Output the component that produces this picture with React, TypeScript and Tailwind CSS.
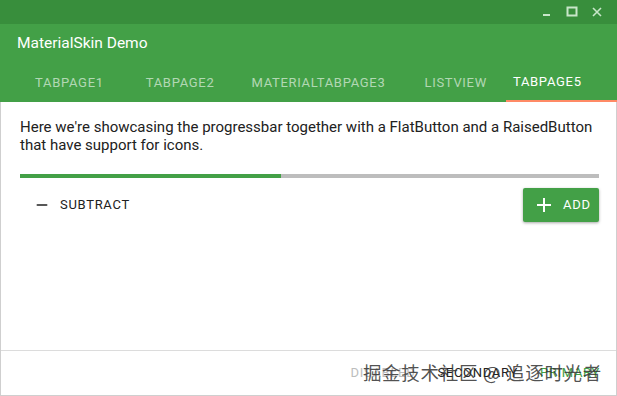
import { Minus } from 'lucide-react';

const tabs = [
  { label: 'TABPAGE1', ml: 'ml-[35px]' },
  { label: 'TABPAGE2', ml: 'ml-[42px]' },
  { label: 'MATERIALTABPAGE3', ml: 'ml-[37px]' },
  { label: 'LISTVIEW', ml: 'ml-[39px]' },
];

export default function App() {
  return (
    <div
      className="w-[617px] h-[396px] flex flex-col bg-white overflow-hidden"
      style={{ fontFamily: 'Roboto, "Noto Sans", sans-serif' }}
    >
      {/* Title bar */}
      <div className="h-[24px] bg-[#388e3c] flex items-center justify-end pr-[14px] gap-[13px] text-[#c8e6c9]">
        <svg width="12" height="12" viewBox="0 0 12 12">
          <rect x="2" y="8" width="7" height="2" fill="currentColor" />
        </svg>
        <svg width="12" height="12" viewBox="0 0 12 12">
          <rect x="1.5" y="1.5" width="9" height="8" fill="none" stroke="currentColor" strokeWidth="2" />
        </svg>
        <svg width="12" height="12" viewBox="0 0 12 12">
          <path d="M2 2 L10 10 M10 2 L2 10" stroke="currentColor" strokeWidth="1.6" />
        </svg>
      </div>

      {/* Header */}
      <div className="bg-[#43a047] h-[78px] flex flex-col">
        <div className="h-[40px] flex items-center pl-[17px] text-white text-[15.5px]">
          MaterialSkin Demo
        </div>
        <div className="flex-1 flex items-stretch text-[13px] tracking-[0.7px]">
          <div className="flex items-center text-white/60 pb-[1px]">
            {tabs.map((t) => (
              <span key={t.label} className={t.ml}>
                {t.label}
              </span>
            ))}
          </div>
          <div className="ml-[19px] flex-1 flex items-center pl-[7px] text-white border-b-[2px] border-[#ff8a65]">
            TABPAGE5
          </div>
        </div>
      </div>

      {/* Content */}
      <div className="flex-1 flex flex-col border-x border-b border-[#cfcfcf]">
        <div className="flex-1 flex flex-col pl-[19px] pr-[17px] pt-[16px]">
          <p className="text-[15px] leading-[18px] text-[#212121]">
            Here we're showcasing the progressbar together with a FlatButton and a RaisedButton that have support for icons.
          </p>
          <div className="mt-[20px] h-[4px] bg-[#bdbdbd] flex">
            <div className="h-full bg-[#43a047]" style={{ width: '45%' }} />
          </div>
          <div className="mt-[10px] flex items-center justify-between">
            <button className="flex items-center gap-[10px] pl-[14px] h-[34px] text-[13px] tracking-[0.7px] text-[#212121]">
              <Minus size={16} strokeWidth={2.5} />
              SUBTRACT
            </button>
            <button className="flex items-center gap-[12px] pl-[14px] w-[76px] h-[34px] bg-[#43a047] text-white text-[13px] tracking-[0.7px] rounded-[2px] shadow-[0_1px_3px_rgba(0,0,0,0.35)]">
              <svg width="14" height="14" viewBox="0 0 14 14">
                <path d="M7 0 V14 M0 7 H14" stroke="currentColor" strokeWidth="2" />
              </svg>
              ADD
            </button>
          </div>
        </div>

        {/* Footer */}
        <div className="relative h-[45px] border-t border-[#dcdcdc] flex items-center justify-end pr-[16px] gap-[22px] text-[13px] tracking-[0.7px]">
          <span className="text-[#bdbdbd]">DISABLED</span>
          <span className="text-[#212121]">SECONDARY</span>
          <span className="text-[#43a047]">PRIMARY</span>
          <div
            className="absolute right-[14px] top-[9px] text-[18.5px] leading-[24px] text-[#333333]/85"
            style={{ fontFamily: '"Noto Sans CJK SC", sans-serif' }}
          >
            掘金技术社区 @ 追逐时光者
          </div>
        </div>
      </div>
    </div>
  );
}
